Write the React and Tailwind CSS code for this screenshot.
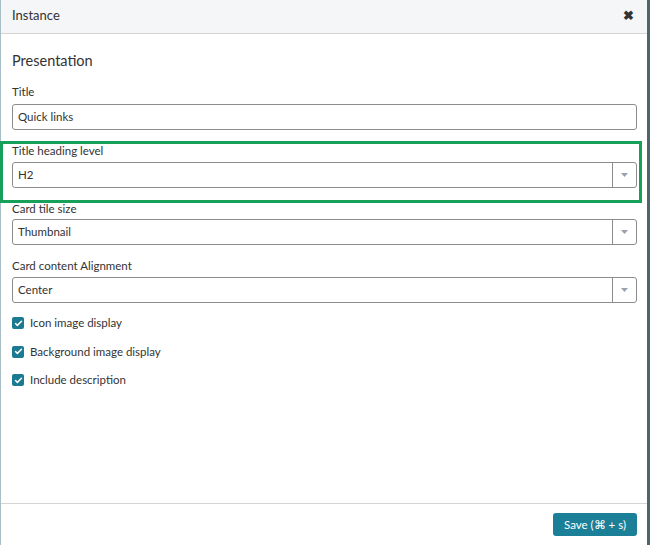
import { Check } from 'lucide-react';

const fields = [
  { label: 'Title heading level', value: 'H2', highlight: true },
  { label: 'Card tile size', value: 'Thumbnail' },
  { label: 'Card content Alignment', value: 'Center' },
];

const checks = ['Icon image display', 'Background image display', 'Include description'];

const Caret = () => (
  <svg width="7" height="4" viewBox="0 0 7 4" className="text-gray-400">
    <path d="M0 0h7L3.5 4z" fill="currentColor" />
  </svg>
);

const Select = ({ value }) => (
  <div className="flex h-[26px] items-stretch rounded-[3px] border border-[#8c8c8c] bg-white">
    <span className="flex flex-1 items-center px-[5px] text-[11.5px] text-[#333]">{value}</span>
    <span className="flex w-[24px] items-center justify-center border-l border-[#8c8c8c]">
      <Caret />
    </span>
  </div>
);

const App = () => {
  return (
    <div className="flex h-[545px] w-[650px] bg-[#4e6570] font-['Lato',sans-serif] text-[#333]">
      <div className="flex w-[647px] flex-col border-l border-[#a9bfc8] bg-white">
        <div className="flex h-[34px] items-center justify-between border-b border-[#d4d4d4] bg-[#f5f6f7] pb-[3px] pl-[11px] pr-[13px]">
          <span className="text-[13px] leading-[16px]">Instance</span>
          <span className="text-[13px] font-bold leading-none text-[#333]">✖</span>
        </div>

        <div className="flex-1 pt-[18px]">
          <h2 className="px-[11px] text-[14.5px] font-normal leading-[18px]">Presentation</h2>

          <div className="mt-[15px] pl-[11px] pr-[10px]">
            <label className="block text-[11.5px] leading-[14px]">Title</label>
            <div className="mt-[5px] flex h-[26px] items-center rounded-[3px] border border-[#8c8c8c] px-[5px] text-[11.5px]">
              Quick links
            </div>
          </div>

          {fields.map((f, i) => (
            <div
              key={f.label}
              className={
                f.highlight
                  ? 'mt-[11px] -ml-px mr-[5px] border-[3px] border-[#16a05a] pb-[12px] pl-[9px] pr-[2px]'
                  : i === 1
                    ? '-mt-[1px] pl-[11px] pr-[10px]'
                    : 'mt-[14px] pl-[11px] pr-[10px]'
              }
            >
              <label className="block text-[11.5px] leading-[14px]">{f.label}</label>
              <div className={i === 1 ? 'mt-[3px]' : 'mt-[4px]'}>
                <Select value={f.value} />
              </div>
            </div>
          ))}

          <div className="mt-[13px] flex flex-col gap-[14.5px] px-[11px]">
            {checks.map((c) => (
              <div key={c} className="flex h-[14px] items-center gap-[6px]">
                <span className="flex h-[12px] w-[12px] items-center justify-center rounded-[2px] bg-[#1b7a91]">
                  <Check className="h-[9px] w-[9px] text-white" strokeWidth={4} />
                </span>
                <span className="text-[11.5px] leading-[14px]">{c}</span>
              </div>
            ))}
          </div>
        </div>

        <div className="flex h-[42px] items-center justify-end border-t border-[#d4d4d4] pr-[10px]">
          <button className="h-[23px] rounded-[3px] bg-[#1b7f97] px-[11px] text-[11.5px] text-white">
            Save (⌘ + s)
          </button>
        </div>
      </div>
    </div>
  );
};

export default App;
